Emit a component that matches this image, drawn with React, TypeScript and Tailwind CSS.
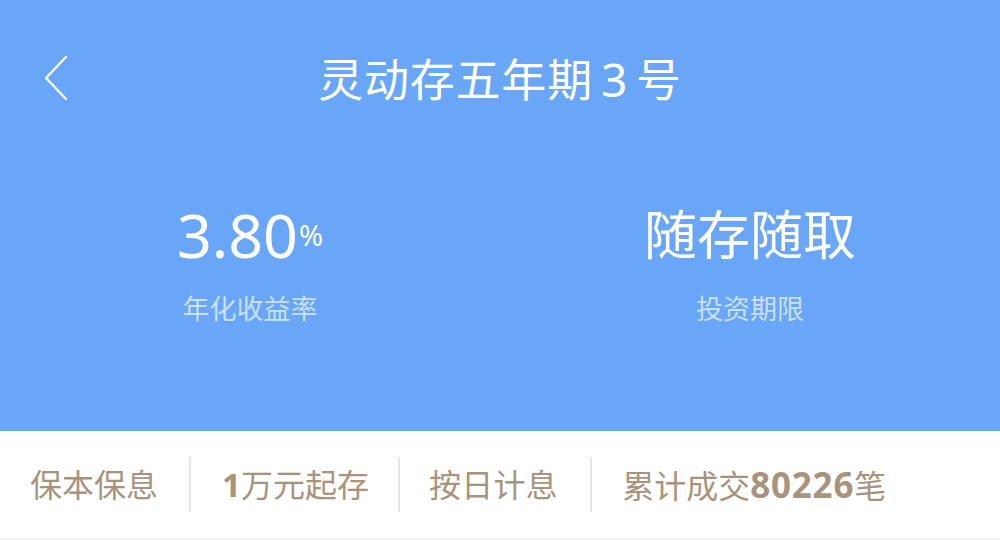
import React from "react";

const font = { fontFamily: '"Noto Sans", "Noto Sans CJK SC", sans-serif' };

function Divider() {
  return <div className="h-[55px] w-[2px] bg-[#e4e4e4] mx-[31px]" />;
}

export default function App() {
  return (
    <div className="w-[1000px] h-[542px] bg-white overflow-hidden" style={font}>
      {/* Blue header */}
      <div className="h-[431px] bg-[#69a6f7] flex flex-col">
        <div className="relative h-[160px] flex items-center justify-center">
          <button className="absolute left-[40px] top-[54px] w-[32px] h-[48px] flex items-center justify-center">
            <svg width="26" height="46" viewBox="0 0 26 46" fill="none">
              <path d="M23 2 L3 23 L23 44" stroke="#fff" strokeWidth="2.4" strokeLinecap="round" strokeLinejoin="round" />
            </svg>
          </button>
          <h1 className="text-[45px] leading-none text-white tracking-[0.8px] pb-[2px]">
            灵动存五年期<span className="mx-[8px] text-[46px]">3</span>号
          </h1>
        </div>

        <div className="grid grid-cols-2">
          <div className="flex flex-col items-center">
            <div className="mt-[42px] h-[70px] flex items-center justify-center pb-[6px]">
              <span className="text-[61px] leading-none text-white">3.80</span>
              <span className="text-[29px] leading-none text-white self-end mb-[17px] ml-[1px]">%</span>
            </div>
            <div className="mt-[24px] h-[24px] flex items-center text-[27px] text-[#cbe0fb] leading-none">
              年化收益率
            </div>
          </div>
          <div className="flex flex-col items-center">
            <div className="mt-[42px] h-[70px] flex items-center justify-center pb-[6px]">
              <span className="text-[53px] leading-none text-white">随存随取</span>
            </div>
            <div className="mt-[24px] h-[24px] flex items-center text-[27px] text-[#cbe0fb] leading-none">
              投资期限
            </div>
          </div>
        </div>
      </div>

      {/* Feature bar */}
      <div className="h-[109px] flex items-center pl-[30px] border-b-2 border-[#f1f1f1] text-[32px] text-[#a8937c] leading-none">
        <span>保本保息</span>
        <Divider />
        <span>
          <span className="text-[33px] font-bold">1</span>万元起存
        </span>
        <div className="h-[55px] w-[2px] bg-[#e4e4e4] ml-[29px] mr-[29px]" />
        <span className="tracking-[0.3px]">按日计息</span>
        <div className="h-[55px] w-[2px] bg-[#e4e4e4] ml-[32px] mr-[30px]" />
        <span>
          累计成交<span className="text-[35px] font-bold tracking-[0.8px]">80226</span>笔
        </span>
      </div>
    </div>
  );
}
